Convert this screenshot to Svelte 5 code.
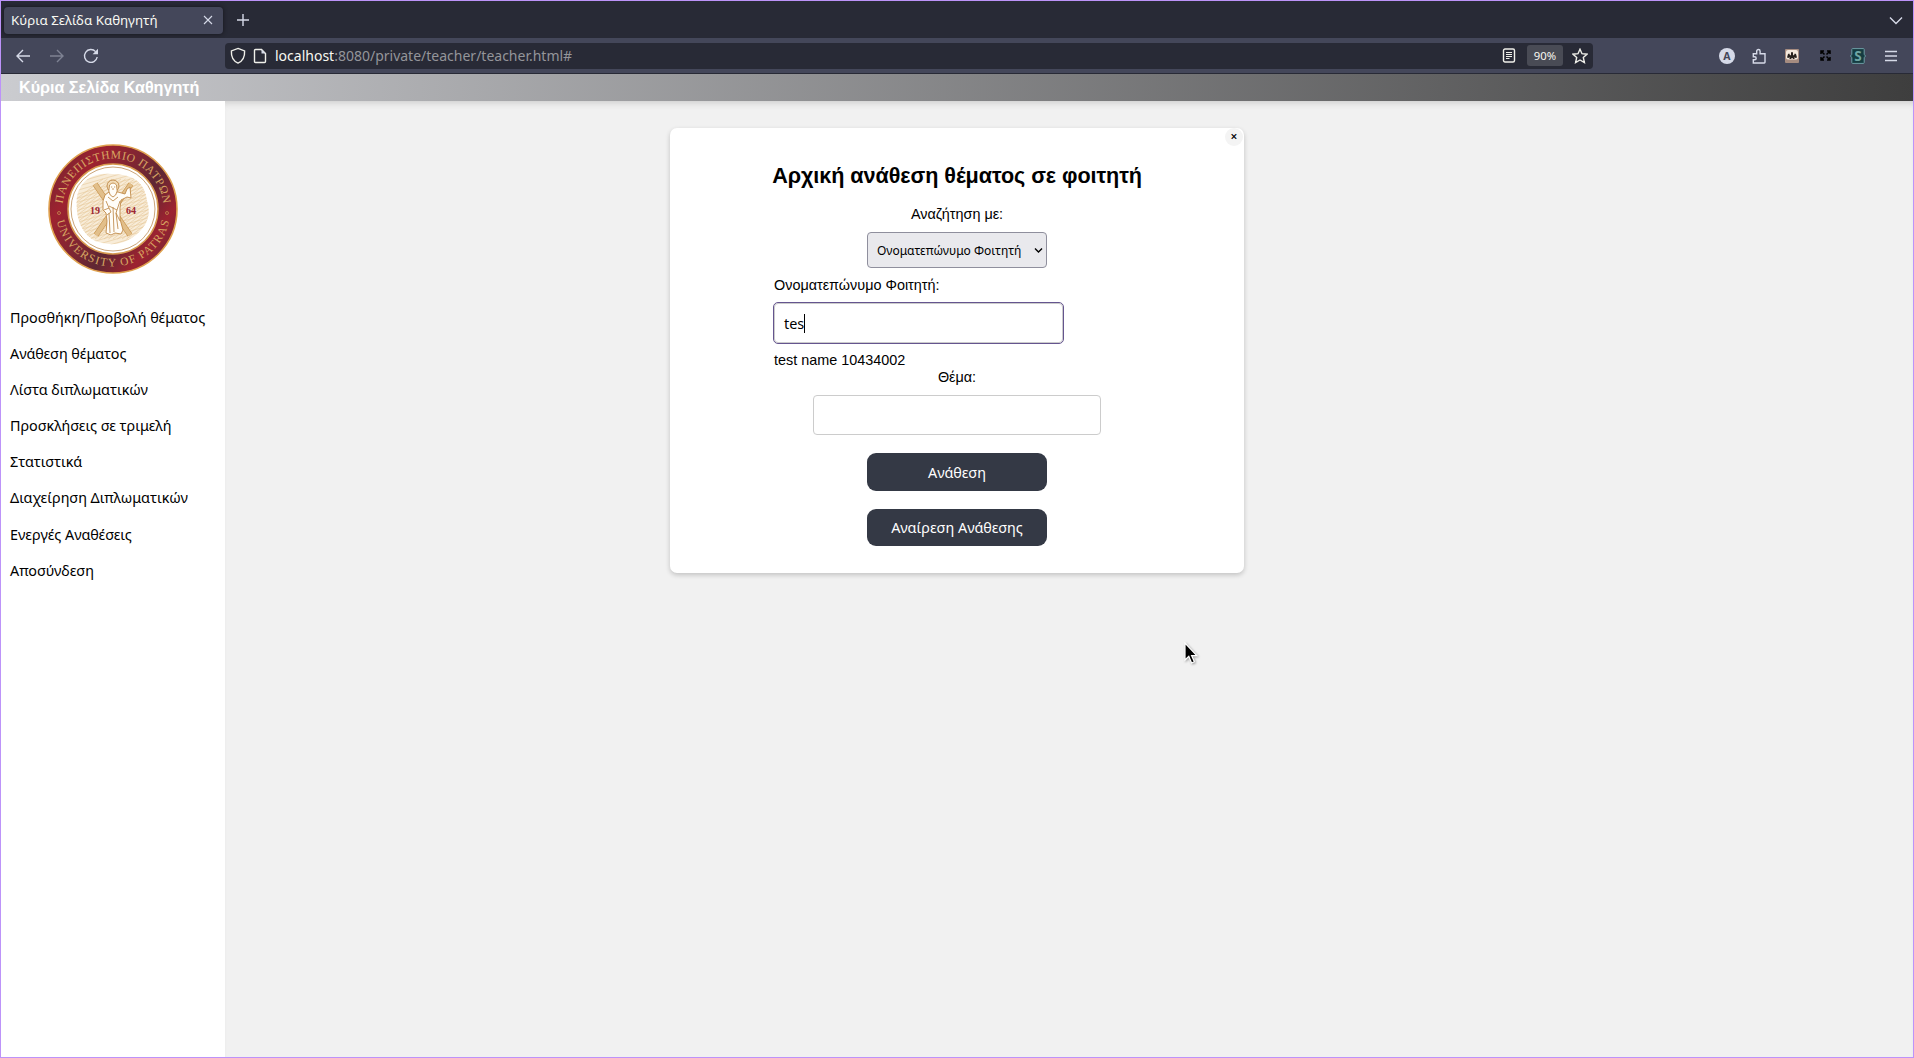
<script>
  const links = ['Προσθήκη/Προβολή θέματος', 'Ανάθεση θέματος', 'Λίστα διπλωματικών', 'Προσκλήσεις σε τριμελή', 'Στατιστικά', 'Διαχείρηση Διπλωματικών', 'Ενεργές Αναθέσεις', 'Αποσύνδεση'];
  const hatch = Array.from({ length: 32 }, (_, i) => i);
</script>

<div class="window">
  <div class="tabs">
    <div class="tab"><span>Κύρια Σελίδα Καθηγητή</span>
      <svg width="10" height="10" viewBox="0 0 10 10"><path d="M1 1l8 8M9 1l-8 8" /></svg>
    </div>
    <svg class="plus" width="12" height="12" viewBox="0 0 12 12"><path d="M6 0v12M0 6h12" /></svg>
    <svg class="chev" width="14" height="9" viewBox="0 0 14 9"><path d="M1 1.5l6 6 6-6" /></svg>
  </div>

  <div class="toolbar">
    <div class="navs">
      <svg width="16" height="16" viewBox="0 0 16 16"><path d="M15 8H2M8 2L2 8l6 6" /></svg>
      <svg class="dim" width="16" height="16" viewBox="0 0 16 16"><path d="M1 8h13M8 2l6 6-6 6" /></svg>
      <svg width="16" height="16" viewBox="0 0 16 16"><path d="M14.2 9A6.4 6.4 0 1 1 12.6 3.6" /><path class="solid" d="M15 .8v5.4H9.6z" /></svg>
    </div>
    <div class="url">
      <svg width="16" height="18" viewBox="0 0 16 18"><path d="M8 1.4l6.6 2.500c.3 5-1.400 10-6.600 12.200C2.800 13.900 1.100 8.900 1.400 3.900z" /></svg>
      <svg width="14" height="16" viewBox="0 0 14 16"><path d="M2.500 1.500h6l4 4v8q0 1-1 1h-9q-1 0-1-1v-11q0-1 1-1z" /><path class="solid" d="M8.500 1.200l4.300 4.300H8.500z" /></svg>
      <p><b>localhost</b>:8080/private/teacher/teacher.html#</p>
      <svg class="reader" width="14" height="15" viewBox="0 0 14 15"><rect x="1.500" y="1" width="11" height="13" rx="1.500" /><path class="thin" d="M4 4.500h6M4 6.500h6M4 8.500h6M4 10.500h3.500" /></svg>
      <span class="zoom">90%</span>
      <svg class="star" width="16" height="16" viewBox="0 0 16 16"><path d="M8 1.200l2 4.500 5 .5-3.700 3.300 1.100 5L8 12l-4.400 2.500 1.100-5L1 6.200l5-.5z" /></svg>
    </div>
    <div class="ext">
      <svg width="16" height="16" viewBox="0 0 16 16"><circle class="solid" cx="8" cy="8" r="8" /><text class="acct" x="8" y="11.700">A</text></svg>
      <svg width="16" height="16" viewBox="0 0 16 16"><path d="M2.300 5.700h3.400V3.200a1.700 1.700 0 0 1 3.400 0v2.500H14v8.600q0 .7-.7.7H2.300v-3.200h1.400a1.500 1.500 0 0 0 0-3H2.300z" /></svg>
      <svg width="14" height="14" viewBox="0 0 14 14"><rect class="tan" width="14" height="14" rx="1" /><rect class="cream" x="1" y="1" width="12" height="9.500" rx="2" /><path class="ink" d="M6 3.200h2v2.500l.8.800 1-2 1.200.5 1 3.500-1.500.5-1-1V10H8l-.5-1H6.800L6 10H4.500V8l-1 1L2 8.500 3 5l1.200-.5 1 2 .8-.8z" /></svg>
      <svg width="11" height="11" viewBox="0 0 11 11"><path class="black" d="M1 4V1h3M1 1l3.500 3.500M7 1h3v3M10 1L6.500 4.500M1 7v3h3M1 10l3.500-3.500M7 10h3V7M10 10L6.500 6.500" /></svg>
      <svg width="16" height="16" viewBox="0 0 16 16"><path class="teal" d="M2.500.6h11q.7 0 .7.700v5L15.500 8l-1.300 1.700v5q0 .7-.7.7h-11q-.7 0-.7-.7v-5L.5 8l1.300-1.700v-5q0-.7.7-.7z" /><text class="s" x="8" y="13">S</text></svg>
      <svg width="12" height="12" viewBox="0 0 12 12"><path d="M0 1.500h12M0 6h12M0 10.500h12" /></svg>
    </div>
  </div>

  <header>Κύρια Σελίδα Καθηγητή</header>

  <div class="body">
    <aside>
      <svg class="seal" width="130" height="130" viewBox="-65 -65 130 130">
        <defs>
          <linearGradient id="red" x1="0" y1=".15" x2="1" y2=".85"><stop offset="0" stop-color="#74242f" /><stop offset=".22" stop-color="#9d2230" /><stop offset=".48" stop-color="#7a2633" /><stop offset=".62" stop-color="#5e2733" /><stop offset=".82" stop-color="#9d2230" /><stop offset="1" stop-color="#6c2736" /></linearGradient>
          <path id="top" d="M-50.500 0A50.500 50.500 0 0 1 50.500 0" />
          <path id="bottom" d="M-57.500 0A57.500 57.500 0 0 0 57.500 0" />
          <clipPath id="disc"><path d="M-36-13Q-30-38 0-35 31-35 34-8 41 13 20 28 4 40-18 32-39 20-36-13z" /></clipPath>
        </defs>
        <circle r="64" fill="url(#red)" stroke="#dfa14e" stroke-width="1.600" />
        <circle r="45" fill="#fff" stroke="#d79b50" stroke-width="1.500" />
        <circle r="42" fill="none" stroke="#bd8e58" stroke-width=".8" />
        <g clip-path="url(#disc)">
          <rect x="-45" y="-45" width="90" height="90" fill="#f8ecd8" />
          {#each hatch as i}
            <path class="hatch" d="M{-90 + i * 4.5} 30L{-10 + i * 4.5}-30M-45 {-40 + i * 4}L45 {-66 + i * 4}" />
          {/each}
        </g>
        <path class="cross-edge" d="M-18-25L17 26M18-25L-17 26" />
        <path class="cross" d="M-18-25L17 26M18-25L-17 26" />
        <circle cx="0" cy="-23" r="6" fill="#f2dcb8" stroke="#bd8745" stroke-width=".9" />
        <path class="robe" d="M-4-17L-8-14-10-8-10 1-7 4-6 12-7 24-2 26 2 24 8 25 10 21 7 10 7-1 8-9 14-12 18-11 17-22 14-20 12-15 5-17z" />
        <path class="robe" d="M-3.500-24q3.500-4 7 0l.7 6q-1 5-4.200 6-3.500-1-4.200-6z" />
        <path class="folds" d="M-2-22h1.200M1-22h1.200M0-21v2M-5-12L0-8 5-12M-7-8l3 7M-4-3L4 1M-4 4L-3 24M0-2L1 23M3 4L5 20M-9 1l5-2 2 4-4 3M7-8L3 4 7 12" />
        <text class="year" x="-18" y="4.500">19</text><text class="year" x="18" y="4.500">64</text>
        <text class="ring"><textPath href="#top" startOffset="50%" textLength="148">ΠΑΝΕΠΙΣΤΗΜΙΟ ΠΑΤΡΩΝ</textPath></text>
        <text class="ring"><textPath href="#bottom" startOffset="50%" textLength="156">UNIVERSITY OF PATRAS</textPath></text>
        <circle class="dot" cx="-54" cy="4" r="1.500" /><circle class="dot" cx="54" cy="4" r="1.500" />
      </svg>
      <nav>{#each links as link}<a href="#top">{link}</a>{/each}</nav>
    </aside>
    <main>
      <section class="card">
        <button class="close" aria-label="Κλείσιμο">×</button>
        <h2>Αρχική ανάθεση θέματος σε φοιτητή</h2>
        <div class="label by">Αναζήτηση με:</div>
        <div class="select"><span>Ονοματεπώνυμο Φοιτητή</span><svg width="9" height="7" viewBox="0 0 9 7"><path d="M1 1.500l3.500 3.500L8 1.500" /></svg></div>
        <div class="student">
          <div class="label">Ονοματεπώνυμο Φοιτητή:</div>
          <div class="input focus">tes<i></i></div>
          <div class="label result">test name 10434002</div>
        </div>
        <div class="label topic">Θέμα:</div>
        <div class="input empty"></div>
        <button class="action">Ανάθεση</button>
        <button class="action undo">Αναίρεση Ανάθεσης</button>
      </section>
    </main>
  </div>
  <svg class="cursor" width="16" height="24" viewBox="0 0 16 24"><path d="M1 1v17l3.800-3.600L7.600 21l2.800-1.200-2.800-6.200h5.200z" /></svg>
</div>

<style>
  :global(body) { margin: 0; }
  * { box-sizing: border-box; }
  .window { position: relative; width: 1914px; height: 1058px; border: 1px solid #bd93f9; background: #f1f1f1; display: flex; flex-direction: column; overflow: hidden; font-family: "Noto Sans", sans-serif; color: #000; }
  svg { flex: none; fill: none; stroke: #d6dae8; stroke-width: 1.4; display: block; }
  .tabs { height: 37px; flex: none; background: #282a36; display: flex; align-items: center; padding: 1px 21px 0 3px; }
  .tab { width: 219px; height: 27px; border-radius: 4px; background: #44475a; box-shadow: 0 0 4px #15161c; display: flex; align-items: center; justify-content: space-between; padding: 0 10px 0 7px; font-size: 13.33px; color: #f8f8f2; }
  .tab svg { stroke-width: 1.1; }
  .plus { margin-left: 14px; }
  .chev { margin-left: auto; margin-right: -11px; }
  .toolbar { height: 36px; flex: none; background: #44475a; border-bottom: 1px solid #282a36; display: flex; align-items: center; padding-right: 6px; }
  .navs { width: 224px; flex: none; display: flex; gap: 18px; padding-left: 14px; }
  .dim { opacity: .4; }
  .solid { fill: #d6dae8; stroke: none; }
  .url { width: 1368px; height: 26px; flex: none; border-radius: 4px; background: #282a36; display: flex; align-items: center; padding: 0 5px; }
  .url svg { stroke: #f0f0ea; }
  .url svg + svg { margin-left: 7px; }
  .url p { margin: 0 auto 0 8px; font-size: 14px; color: #94959a; }
  .url b { font-weight: 400; color: #f8f8f2; }
  .thin { stroke-width: 1; }
  .zoom { width: 36px; height: 21px; margin: 0 9px 0 11px; border-radius: 3px; background: #494b55; color: #f8f8f2; font-size: 11.3px; line-height: 21px; text-align: center; }
  .ext { margin-left: auto; display: grid; grid-template-columns: repeat(6, 32.8px); place-items: center; }
  .acct { fill: #44475a; stroke: none; font: bold 10.5px "Noto Sans", sans-serif; text-anchor: middle; }
  .tan { fill: #a68c80; stroke: none; }
  .cream { fill: #f4e9dd; stroke: none; }
  .ink { fill: #28221f; stroke: none; }
  .black { stroke: #000; stroke-width: 1.5; }
  .teal { fill: #153c41; stroke: #6e9ca4; stroke-width: 1; }
  .s { fill: #6fa5a4; stroke: none; font: bold 13.5px "Noto Sans", sans-serif; text-anchor: middle; }
  header { position: relative; z-index: 1; height: 27px; flex: none; padding-left: 18px; background: linear-gradient(90deg, #cbccd0, #3e3e3e); font: bold 16.2px/26px "Liberation Sans", sans-serif; letter-spacing: -.04px; color: #fff; }
  .body { flex: 1; display: flex; }
  aside { position: relative; z-index: 2; width: 224px; background: #fff; padding-top: 43px; }
  .seal { margin: 0 auto; }
  .ring { fill: #d8a762; stroke: none; font: 11.5px "Liberation Serif", serif; text-anchor: middle; }
  .year { fill: #9c2633; stroke: none; font: bold 10px "Liberation Serif", serif; text-anchor: middle; }
  .hatch { stroke: #e6c898; stroke-width: .6; }
  .cross-edge { stroke: #c9954f; stroke-width: 5.6; }
  .cross { stroke: #e2bf8a; stroke-width: 4.2; }
  .robe { fill: #fffdf8; stroke: #c08a48; stroke-width: .9; }
  .folds { stroke: #b9803c; stroke-width: .8; }
  .dot { stroke: #c99a52; stroke-width: .7; }
  nav { display: flex; flex-direction: column; padding: 25.5px 0 0 9px; }
  nav a { height: 36.2px; line-height: 36px; font-size: 14.4px; letter-spacing: -.04px; color: #000; text-decoration: none; white-space: nowrap; }
  main { flex: 1; padding-top: 27px; box-shadow: inset 0 7px 7px -5px #ccc; }
  .card { position: relative; width: 574px; height: 445px; margin-left: 445px; background: #fff; border-radius: 7px; box-shadow: 0 2px 5px rgba(0, 0, 0, .2); display: flex; flex-direction: column; align-items: center; padding-top: 35px; }
  .close { position: absolute; top: 0; right: 1px; width: 18px; height: 18px; padding: 0; border: 0; border-radius: 9px; background: #f4f4f4; font: 600 12px/16px "Noto Sans", sans-serif; color: #000; }
  h2 { margin: 0; font: bold 21.6px/25px "Liberation Sans", sans-serif; letter-spacing: -.06px; white-space: nowrap; }
  .label { font: 14.4px/16px "Liberation Sans", sans-serif; }
  .by { margin: 18px 0 10px; }
  .select { width: 180px; height: 36px; border: 1px solid #8f8f9d; border-radius: 4px; background: #e9e9ed; display: flex; align-items: center; justify-content: space-between; padding: 0 3px 0 9px; font-size: 12px; }
  .select svg { stroke: #000; }
  .student { width: 366px; margin-top: 9px; }
  .input { height: 40px; width: 288px; border: 1px solid #ccc; border-radius: 4px; background: #fff; }
  .focus { width: 289px; margin-top: 10px; padding-left: 9px; display: flex; align-items: center; font-size: 14.4px; outline: 1px solid #65558f; }
  .focus i { width: 1px; height: 19px; background: #000; }
  .result { margin-top: 9px; }
  .topic { margin: 1px 0 10px; }
  .action { width: 180px; height: 38px; margin: 18px 0 0; padding: 0; border: 0; border-radius: 9px; background: #343945; color: #fff; font: 14.4px "Noto Sans", sans-serif; }
  .undo { height: 37px; }
  .cursor { position: absolute; left: 1183px; top: 641px; filter: drop-shadow(1px 1px 1px rgba(0, 0, 0, .35)); }
  .cursor path { fill: #000; stroke: #fff; stroke-width: 1.2; }
</style>
